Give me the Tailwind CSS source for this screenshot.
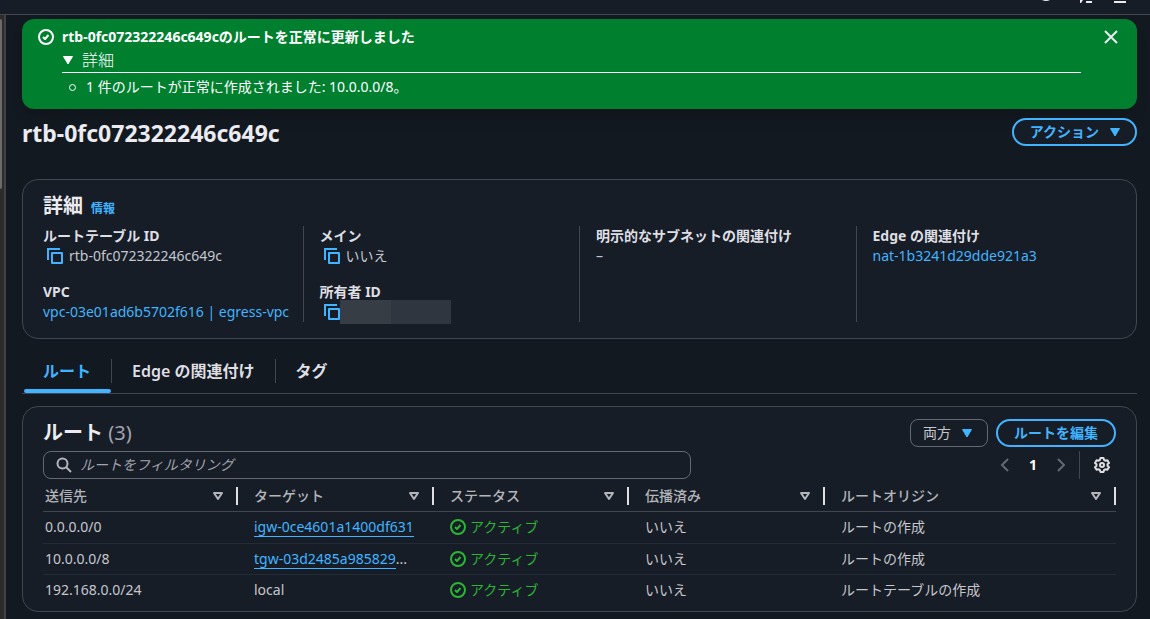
<!DOCTYPE html>
<html lang="ja">
<head>
    <meta charset="UTF-8">
    <meta name="viewport" content="width=device-width, initial-scale=1.0">
    <title>rtb-0fc072322246c649c | VPC</title>
    <script src="https://cdn.jsdelivr.net/npm/@tailwindcss/browser@4"></script>
</head>
<body class="flex h-screen flex-col overflow-hidden bg-[#131920] font-['Noto_Sans','Noto_Sans_CJK_JP',sans-serif] text-sm/5 text-[#c6c6cd]">
    <svg class="hidden">
        <symbol id="check" viewBox="0 0 16 16" fill="none" stroke="currentColor" stroke-width="2">
            <circle cx="8" cy="8" r="7"/>
            <path d="m5 8 2 2 3.500-4" stroke-linejoin="round"/>
        </symbol>
        <symbol id="copy" viewBox="0 0 16 16" fill="none" stroke="currentColor" stroke-width="2">
            <path d="M15 5v10H5V5z" stroke-linejoin="round"/>
            <path d="M13 1H1v11"/>
        </symbol>
        <symbol id="caret" viewBox="0 0 12 10">
            <path d="M1.500 1.500h9L6 9z" fill="currentColor" stroke="currentColor" stroke-linejoin="round"/>
        </symbol>
        <symbol id="sort" viewBox="0 0 12 10">
            <path d="M2 2h8L6 8z" fill="none" stroke="currentColor" stroke-width="2" stroke-linejoin="round"/>
        </symbol>
    </svg>

    <!-- Global bar -->
    <header class="flex h-[15px] shrink-0 items-start justify-end border-b border-[#424650] bg-[#161d26] pr-6">
        <svg class="h-1 w-24 text-[#ebebf0]" viewBox="0 0 96 4" fill="currentColor">
            <path d="M12 0h8q-4 2-8 0z"/>
            <path d="M50 0h3l-2 3h-1zM56 1h6v2h-6zM84 1h12v2H84z"/>
        </svg>
    </header>

    <div class="flex min-h-0 flex-1">
        <!-- Side scroll track -->
        <div class="w-1.5 shrink-0 border-r-2 border-[#424242] bg-[#2c2c2c]">
            <div class="mt-1 h-[170px] w-0.5 rounded-r bg-[#6b6b6b]"></div>
        </div>

        <main class="min-w-0 flex-1 pt-1 pr-[13px] pl-4">
            <section class="flex h-[90px] items-start rounded-xl bg-[#00802f] pt-2 pr-[18px] pl-4 text-white shadow-lg">
                <svg class="mt-0.5 mr-2 size-4 shrink-0"><use href="#check"/></svg>
                <div class="min-w-0 flex-1">
                    <h2 class="font-bold">rtb-0fc072322246c649cのルートを正常に更新しました</h2>
                    <details open>
                        <summary class="flex h-[26px] list-none items-center gap-2 border-b border-white text-base font-light">
                            <svg class="h-2.5 w-3"><use href="#caret"/></svg>詳細
                        </summary>
                        <ul class="mt-1">
                            <li class="flex items-center gap-2.5 pl-[7px]"><span class="size-[7px] rounded-full border border-white"></span>1 件のルートが正常に作成されました: 10.0.0.0/8。</li>
                        </ul>
                    </details>
                </div>
                <button type="button" aria-label="閉じる" class="mt-0.5 ml-[22px] text-[#ebebf0]">
                    <svg class="size-4" viewBox="0 0 16 16" fill="none" stroke="currentColor" stroke-width="2"><path d="m2 2 12 12M14 2 2 14"/></svg>
                </button>
            </section>

            <div class="mt-2 flex items-start justify-between">
                <h1 class="text-[23px]/8 font-bold text-[#ebebf0]">rtb-0fc072322246c649c</h1>
                <button type="button" class="mt-px flex h-7 items-center gap-2.5 rounded-full border-2 border-[#42b4ff] bg-[#161d26] pr-3.5 pl-4 font-bold text-[#42b4ff]">アクション<svg class="h-2.5 w-3"><use href="#caret"/></svg></button>
            </div>

            <section class="mt-[30px] h-40 rounded-2xl border border-[#424650] bg-[#161d26] px-5 pt-3">
                <div class="flex items-baseline gap-2">
                    <h2 class="text-xl/7 font-bold text-[#ebebf0]">詳細</h2>
                    <a href="#" class="text-xs font-bold text-[#42b4ff]">情報</a>
                </div>
                <dl class="mt-1.5 grid h-24 grid-cols-4 gap-x-[33px]">
                    <div>
                        <dt class="font-bold text-[#dedee3]">ルートテーブル ID</dt>
                        <dd class="flex h-5 items-center gap-1.5 pl-1"><button type="button" aria-label="コピー" class="text-[#42b4ff]"><svg class="size-4"><use href="#copy"/></svg></button>rtb-0fc072322246c649c</dd>
                        <dt class="mt-4 font-bold text-[#dedee3]">VPC</dt>
                        <dd class="whitespace-nowrap"><a href="#" class="text-[#42b4ff]">vpc-03e01ad6b5702f616 | egress-vpc</a></dd>
                    </div>
                    <div class="-ml-[17px] border-l border-[#424650] pl-4">
                        <dt class="font-bold text-[#dedee3]">メイン</dt>
                        <dd class="flex h-5 items-center gap-1.5 pl-1"><button type="button" aria-label="コピー" class="text-[#42b4ff]"><svg class="size-4"><use href="#copy"/></svg></button>いいえ</dd>
                        <dt class="mt-4 font-bold text-[#dedee3]">所有者 ID</dt>
                        <dd class="flex h-5 items-center pl-1"><button type="button" aria-label="コピー" class="text-[#42b4ff]"><svg class="size-4"><use href="#copy"/></svg></button><span class="h-6 w-[111px] bg-linear-to-r from-[#363d45] from-46% to-[#30363f] to-46%"></span></dd>
                    </div>
                    <div class="-ml-[17px] border-l border-[#424650] pl-4">
                        <dt class="font-bold text-[#dedee3]">明示的なサブネットの関連付け</dt>
                        <dd>–</dd>
                    </div>
                    <div class="-ml-[17px] border-l border-[#424650] pl-4">
                        <dt class="font-bold text-[#dedee3]">Edge の関連付け</dt>
                        <dd><a href="#" class="text-[#42b4ff]">nat-1b3241d29dde921a3</a></dd>
                    </div>
                </dl>
            </section>

            <nav class="mt-5 flex h-[35px] border-b border-[#424650] text-base/6 font-semibold text-[#dedee3]">
                <button type="button" class="relative ml-0.5 h-6 pr-5 pl-[19px] text-[#42b4ff]">ルート<span class="absolute inset-x-0 -bottom-2.5 h-1 rounded-full bg-[#42b4ff]"></span></button>
                <button type="button" class="h-6 border-x border-[#424650] px-5">Edge の関連付け</button>
                <button type="button" class="h-6 px-5">タグ</button>
            </nav>

            <section class="mt-3 rounded-2xl border border-[#424650] bg-[#161d26] px-5 pt-3 pb-1.5">
                <div class="flex justify-between">
                    <h2 class="text-xl/7 font-bold text-[#ebebf0]">ルート <span class="font-normal text-[#a4a4ad]">(3)</span></h2>
                    <div class="flex gap-2">
                        <button type="button" class="flex h-7 items-center gap-2.5 rounded-lg border border-[#656871] pr-3.5 pl-3">両方<svg class="h-2.5 w-3 text-[#42b4ff]"><use href="#caret"/></svg></button>
                        <button type="button" class="flex h-7 items-center rounded-full border-2 border-[#42b4ff] px-4 font-bold text-[#42b4ff]">ルートを編集</button>
                    </div>
                </div>
                <div class="mt-1 flex items-center justify-between">
                    <label class="flex h-7 w-[648px] items-center gap-2 rounded-lg border border-[#656871] px-3 text-[#b4b4bb]">
                        <svg class="size-4 shrink-0" viewBox="0 0 16 16" fill="none" stroke="currentColor" stroke-width="2"><circle cx="6.500" cy="6.500" r="5"/><path d="m10 10 5 5"/></svg>
                        <input type="search" aria-label="ルートをフィルタリング" placeholder="ルートをフィルタリング" class="min-w-0 flex-1 outline-none placeholder:text-[#a4a4ad] placeholder:italic">
                    </label>
                    <div class="flex h-7 items-center pr-1.5">
                        <button type="button" aria-label="前へ" class="text-[#656871]"><svg class="size-4" viewBox="0 0 16 16" fill="none" stroke="currentColor" stroke-width="2"><path d="m11 2-6 6 6 6"/></svg></button>
                        <button type="button" class="w-10 font-bold text-white">1</button>
                        <button type="button" aria-label="次へ" class="mr-2.5 text-[#656871]"><svg class="size-4" viewBox="0 0 16 16" fill="none" stroke="currentColor" stroke-width="2"><path d="m5 2 6 6-6 6"/></svg></button>
                        <div class="flex h-7 items-center border-l border-[#424650] pl-3.5">
                            <button type="button" aria-label="設定" class="text-[#dedee3]"><svg class="size-4" viewBox="0 0 16 16" fill="none" stroke="currentColor" stroke-width="2" stroke-linejoin="round"><path d="M6.500 1h3l.6 2 1.300.7 2-.5 1.600 2.700L13.500 7.300v1.400l1.500 1.500-1.600 2.600-2-.5-1.300.7-.6 2h-3l-.6-2-1.300-.7-2 .5L1 10.200l1.500-1.500V7.300L1 5.900l1.600-2.700 2 .5L5.900 3z"/><circle cx="8" cy="8" r="2"/></svg></button>
                        </div>
                    </div>
                </div>
                <table class="mt-[3px] w-full table-fixed text-left">
                    <colgroup>
                        <col class="w-[195px]">
                        <col class="w-[196px]">
                        <col class="w-[195px]">
                        <col class="w-[196px]">
                        <col>
                    </colgroup>
                    <thead class="text-[#b4b4bb]">
                        <tr class="h-[29px] border-b border-[#424650]">
                            <th class="p-0 pl-0.5 font-medium"><div class="flex h-[18px] items-center justify-between border-r-2 border-[#dedee3] pr-3">送信先<svg class="h-2.5 w-3"><use href="#sort"/></svg></div></th>
                            <th class="p-0 pl-4 font-medium"><div class="flex h-[18px] items-center justify-between border-r-2 border-[#dedee3] pr-3">ターゲット<svg class="h-2.5 w-3"><use href="#sort"/></svg></div></th>
                            <th class="p-0 pl-4 font-medium"><div class="flex h-[18px] items-center justify-between border-r-2 border-[#dedee3] pr-3">ステータス<svg class="h-2.5 w-3"><use href="#sort"/></svg></div></th>
                            <th class="p-0 pl-4 font-medium"><div class="flex h-[18px] items-center justify-between border-r-2 border-[#dedee3] pr-3">伝播済み<svg class="h-2.5 w-3"><use href="#sort"/></svg></div></th>
                            <th class="p-0 pl-4 font-medium"><div class="flex h-[18px] items-center justify-between border-r-2 border-[#dedee3] pr-3">ルートオリジン<svg class="h-2.5 w-3"><use href="#sort"/></svg></div></th>
                        </tr>
                    </thead>
                    <tbody>
                        <tr class="h-8 border-b border-[#232b37]">
                            <td class="pl-0.5">0.0.0.0/0</td>
                            <td class="truncate pl-4"><a href="#" class="border-b border-[#42b4ff] text-[#42b4ff]">igw-0ce4601a1400df631</a></td>
                            <td class="pl-4"><span class="flex items-center gap-1 text-[#2bb534]"><svg class="size-4"><use href="#check"/></svg>アクティブ</span></td>
                            <td class="pl-4">いいえ</td>
                            <td class="pl-4">ルートの作成</td>
                        </tr>
                        <tr class="h-[31px] border-b border-[#232b37]">
                            <td class="pl-0.5">10.0.0.0/8</td>
                            <td class="truncate pl-4"><a href="#" class="border-b border-[#42b4ff] text-[#42b4ff]">tgw-03d2485a985829</a>...</td>
                            <td class="pl-4"><span class="flex items-center gap-1 text-[#2bb534]"><svg class="size-4"><use href="#check"/></svg>アクティブ</span></td>
                            <td class="pl-4">いいえ</td>
                            <td class="pl-4">ルートの作成</td>
                        </tr>
                        <tr class="h-[31px]">
                            <td class="pl-0.5">192.168.0.0/24</td>
                            <td class="truncate pl-4">local</td>
                            <td class="pl-4"><span class="flex items-center gap-1 text-[#2bb534]"><svg class="size-4"><use href="#check"/></svg>アクティブ</span></td>
                            <td class="pl-4">いいえ</td>
                            <td class="pl-4">ルートテーブルの作成</td>
                        </tr>
                    </tbody>
                </table>
            </section>
        </main>
    </div>
</body>
</html>
